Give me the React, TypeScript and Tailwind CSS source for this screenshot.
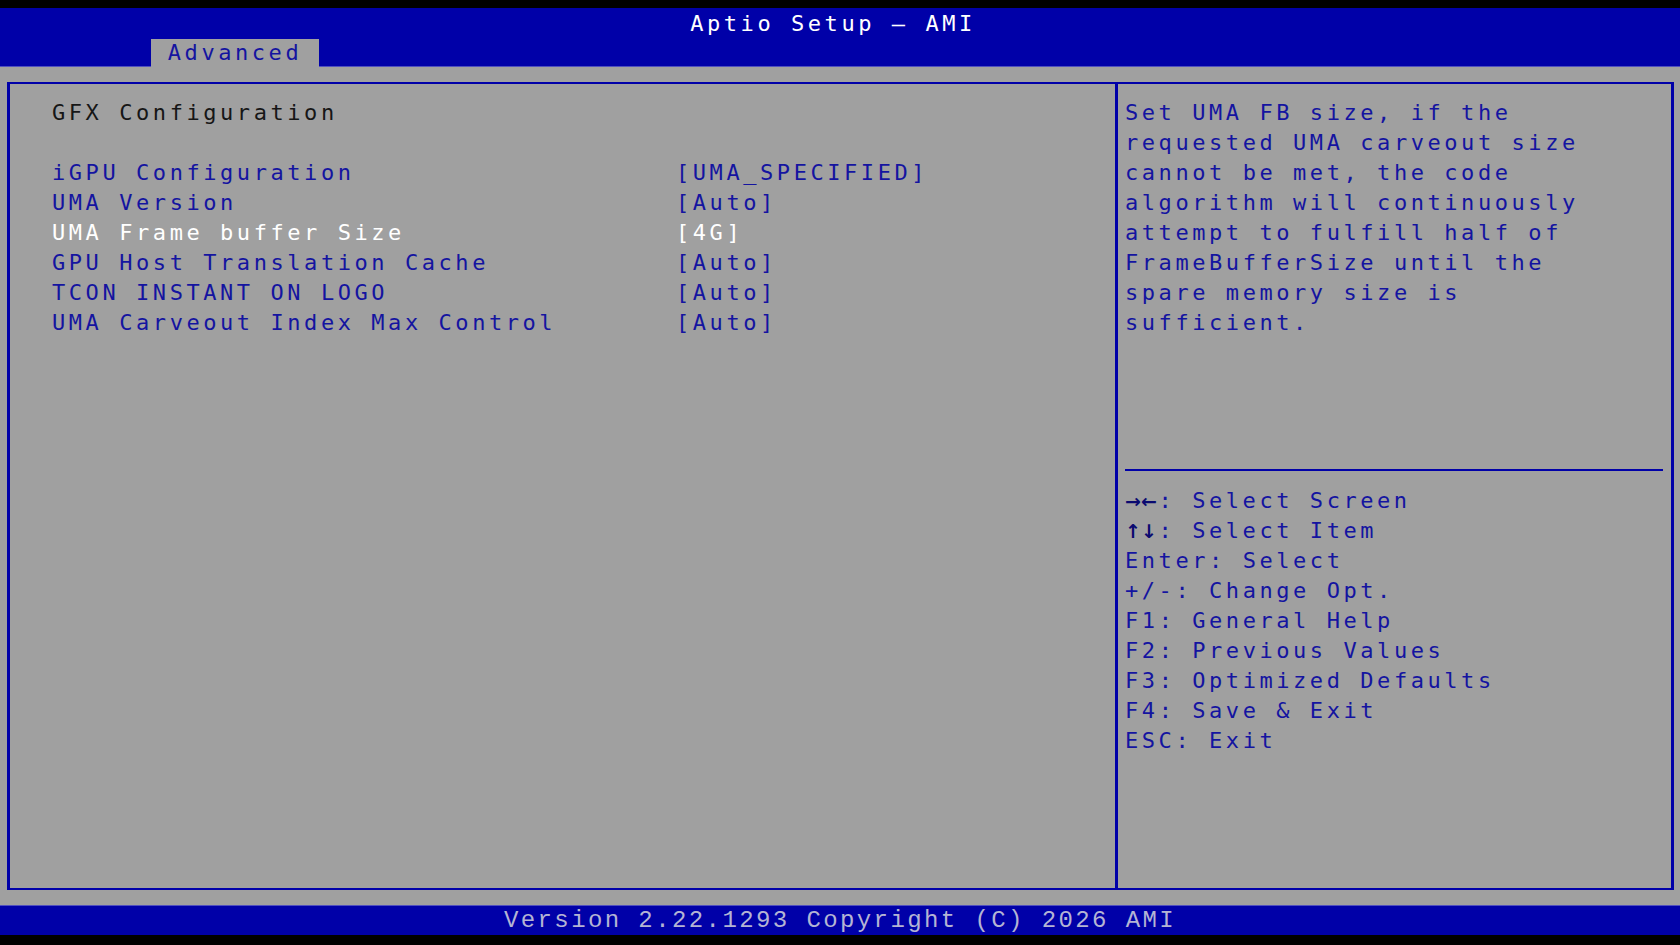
import React from 'react';

const mono = "font-['DejaVu_Sans_Mono',monospace] text-[22px] tracking-[3.56px] leading-[30px]";

const items = [
  { label: 'iGPU Configuration', value: '[UMA_SPECIFIED]' },
  { label: 'UMA Version', value: '[Auto]' },
  { label: 'UMA Frame buffer Size', value: '[4G]', selected: true },
  { label: 'GPU Host Translation Cache', value: '[Auto]' },
  { label: 'TCON INSTANT ON LOGO', value: '[Auto]' },
  { label: 'UMA Carveout Index Max Control', value: '[Auto]' },
];

const helpLines = [
  'Set UMA FB size, if the',
  'requested UMA carveout size',
  'cannot be met, the code',
  'algorithm will continuously',
  'attempt to fulfill half of',
  'FrameBufferSize until the',
  'spare memory size is',
  'sufficient.',
];

const keys = [
  { k: '→←', rest: ': Select Screen', bold: true },
  { k: '↑↓', rest: ': Select Item', bold: true },
  { k: 'Enter', rest: ': Select' },
  { k: '+/-', rest: ': Change Opt.' },
  { k: 'F1', rest: ': General Help' },
  { k: 'F2', rest: ': Previous Values' },
  { k: 'F3', rest: ': Optimized Defaults' },
  { k: 'F4', rest: ': Save & Exit' },
  { k: 'ESC', rest: ': Exit' },
];

const App = () => {
  return (
    <div className="w-[1680px] h-[945px] bg-black flex flex-col overflow-hidden">
      <div className="h-[8px] bg-black" />

      {/* header */}
      <div className="h-[59px] bg-[#0000a8] flex flex-col border-b border-[#5050c0]">
        <div className={`h-[31px] pt-[1px] pr-[14px] text-center text-white ${mono}`}>Aptio Setup – AMI</div>
        <div className="flex pl-[151px]">
          <div className={`relative z-10 h-[28px] w-[168px] bg-[#a0a0a0] text-[#1414a0] flex items-center justify-center ${mono} leading-[28px]`}>
            Advanced
          </div>
        </div>
      </div>

      {/* body */}
      <div className="h-[838px] bg-[#a0a0a0] pt-[15px] pb-[15px] pl-[7px] pr-[6px] flex">
        <div className="flex-1 flex border-t-2 border-b-2 border-l-[3px] border-r-[3px] border-[#0000a8]">
          <div className={`w-[1105px] pt-[14px] pl-[42px] ${mono}`}>
            <div className="text-[#161616]">GFX Configuration</div>
            <div className="h-[30px]" />
            {items.map((it) => (
              <div key={it.label} className={`flex ${it.selected ? 'text-white' : 'text-[#1414a0]'}`}>
                <span className="w-[624px]">{it.label}</span>
                <span>{it.value}</span>
              </div>
            ))}
          </div>
          <div className="w-[3px] bg-[#0000a8]" />
          <div className={`flex-1 flex flex-col pl-[7px] pr-[8px] text-[#1414a0] ${mono}`}>
            <div className="h-[385px] pt-[14px]">
              {helpLines.map((l) => (
                <div key={l} className="whitespace-pre">{l}</div>
              ))}
            </div>
            <div className="h-[2px] bg-[#0000a8]" />
            <div className="pt-[15px]">
              {keys.map((k) => (
                <div key={k.k} className="whitespace-pre flex">
                  {k.bold ? (
                    <span className="inline-block w-[33.6px] overflow-hidden font-['DejaVu_Sans',sans-serif] font-bold text-[19px] tracking-[0px] text-[#0a0a70]">
                      {k.k}
                    </span>
                  ) : (
                    <span>{k.k}</span>
                  )}
                  <span>{k.rest}</span>
                </div>
              ))}
            </div>
          </div>
        </div>
      </div>

      {/* footer */}
      <div className="h-[30px] bg-[#0000a8] flex items-center justify-center border-t border-[#5050c0]">
        <span className="font-['Liberation_Mono',monospace] text-[24px] tracking-[2.4px] leading-[30px] text-[#b4b4d4]">
          Version 2.22.1293 Copyright (C) 2026 AMI
        </span>
      </div>
      <div className="flex-1 bg-black" />
    </div>
  );
};

export default App;
